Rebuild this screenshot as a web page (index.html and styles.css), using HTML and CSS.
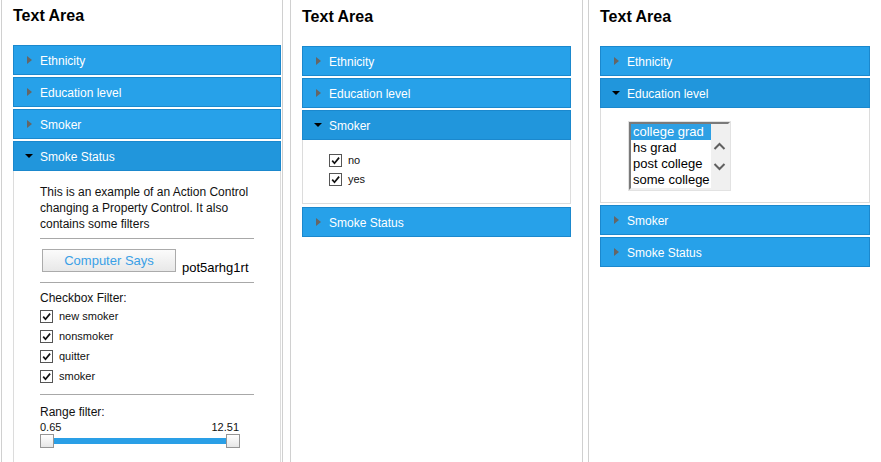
FILE: index.html
```html
<!DOCTYPE html>
<html lang="en">
<head>
    <meta charset="UTF-8">
    <title>Text Area</title>
    <link rel="stylesheet" href="styles.css">
</head>
<body>
    <div class="panels">
        <!-- first panel : smoke status opened -->
        <div class="panel panel-one">
            <h2 class="panel-title">Text Area</h2>
            <div class="acc-head"><span class="caret"></span>Ethnicity</div>
            <div class="acc-head"><span class="caret"></span>Education level</div>
            <div class="acc-head"><span class="caret"></span>Smoker</div>
            <div class="acc-head is-open"><span class="caret"></span>Smoke Status</div>
            <div class="acc-body status-body">
                <p class="intro">This is an example of an Action Control changing a Property Control. It also contains some filters</p>
                <hr class="sep">
                <div class="says-row">
                    <button class="says-btn">Computer Says</button>
                    <span class="says-value">pot5arhg1rt</span>
                </div>
                <hr class="sep">
                <div class="filter-label">Checkbox Filter:</div>
                <div class="check-row">
                    <span class="check"><svg viewBox="0 0 11 11" width="11" height="11"><path d="M2.2 5.6l2.3 2.6 4.6-5.6" /></svg></span>new smoker
                </div>
                <div class="check-row">
                    <span class="check"><svg viewBox="0 0 11 11" width="11" height="11"><path d="M2.2 5.6l2.3 2.6 4.6-5.6" /></svg></span>nonsmoker
                </div>
                <div class="check-row">
                    <span class="check"><svg viewBox="0 0 11 11" width="11" height="11"><path d="M2.2 5.6l2.3 2.6 4.6-5.6" /></svg></span>quitter
                </div>
                <div class="check-row">
                    <span class="check"><svg viewBox="0 0 11 11" width="11" height="11"><path d="M2.2 5.6l2.3 2.6 4.6-5.6" /></svg></span>smoker
                </div>
                <hr class="sep">
                <div class="filter-label range-label">Range filter:</div>
                <div class="range-values"><span>0.65</span><span>12.51</span></div>
                <div class="range">
                    <span class="thumb"></span>
                    <span class="thumb"></span>
                </div>
            </div>
        </div>

        <!-- second panel : smoker opened -->
        <div class="panel panel-two">
            <h2 class="panel-title">Text Area</h2>
            <div class="acc-head"><span class="caret"></span>Ethnicity</div>
            <div class="acc-head"><span class="caret"></span>Education level</div>
            <div class="acc-head is-open"><span class="caret"></span>Smoker</div>
            <div class="acc-body smoker-body">
                <div class="check-row short">
                    <span class="check"><svg viewBox="0 0 11 11" width="11" height="11"><path d="M2.2 5.6l2.3 2.6 4.6-5.6" /></svg></span>no
                </div>
                <div class="check-row short">
                    <span class="check"><svg viewBox="0 0 11 11" width="11" height="11"><path d="M2.2 5.6l2.3 2.6 4.6-5.6" /></svg></span>yes
                </div>
            </div>
            <div class="acc-head"><span class="caret"></span>Smoke Status</div>
        </div>

        <!-- third panel : education level opened -->
        <div class="panel panel-three">
            <h2 class="panel-title">Text Area</h2>
            <div class="acc-head"><span class="caret"></span>Ethnicity</div>
            <div class="acc-head is-open"><span class="caret"></span>Education level</div>
            <div class="acc-body education-body">
                <div class="listbox">
                    <div class="listbox-inner">
                        <ul class="list-items">
                            <li class="is-selected">college grad</li>
                            <li>hs grad</li>
                            <li>post college</li>
                            <li>some college</li>
                        </ul>
                        <div class="list-scroll">
                            <svg viewBox="0 0 17 64" width="17" height="64">
                                <path d="M3.5 25l5-5 5 5" />
                                <path d="M3.5 40l5 5 5-5" />
                            </svg>
                        </div>
                    </div>
                </div>
            </div>
            <div class="acc-head"><span class="caret"></span>Smoker</div>
            <div class="acc-head"><span class="caret"></span>Smoke Status</div>
        </div>
    </div>
</body>
</html>
```

FILE: styles.css
```css
body {
    margin: 0;
    font-family: "Liberation Sans", Arial, sans-serif;
    color: #111;
    background: #fff;
}

.panels {
    display: flex;
    height: 462px;
    overflow: hidden;
}

.panel {
    box-sizing: border-box;
    border-left: 1px solid #d0d0d0;
    border-right: 1px solid #d0d0d0;
    padding: 7px 11px 0 11px;
    flex: none;
}

.panel-one {
    width: 282px;
    margin-left: 1px;
    padding: 6px 1px 0 11px;
}

.panel-two {
    width: 293px;
    margin-left: 7px;
}

.panel-three {
    width: 293px;
    margin-left: 5px;
    border-right: 0;
}

.panel-title {
    margin: 0 0 19px;
    font-size: 16px;
    line-height: 20px;
    font-weight: bold;
    color: #000;
}

/* accordion */
.acc-head {
    box-sizing: border-box;
    display: flex;
    align-items: center;
    height: 30px;
    margin-bottom: 2px;
    padding: 2px 0 0 13px;
    background: #27a1e9;
    border: 1px solid #1b88cd;
    color: #fff;
    font-size: 12px;
}

.caret {
    width: 0;
    height: 0;
    margin: -2px 8px 0 0;
    border-left: 5px solid #666;
    border-top: 4px solid transparent;
    border-bottom: 4px solid transparent;
}

.acc-head.is-open {
    padding-left: 11px;
    margin-bottom: 0;
    background: #2196dc;
}

.acc-head.is-open .caret {
    border-left: 4px solid transparent;
    border-right: 4px solid transparent;
    border-top: 4px solid #000;
    border-bottom: 0;
    margin-right: 7px;
}

.acc-body {
    border: 1px solid #dcdcdc;
    border-top: 0;
    margin-bottom: 2px;
    padding: 0 26px;
}

.status-body {
    padding-top: 13px;
    padding-bottom: 20px;
    font-size: 12px;
}

.smoker-body {
    padding-top: 11px;
    padding-bottom: 14px;
    margin-bottom: 3px;
}

.education-body {
    padding-top: 13px;
    padding-bottom: 11px;
}

.intro {
    margin: 0;
    line-height: 16px;
}

.sep {
    height: 0;
    border: 0;
    border-top: 1px solid #a8a8a8;
    margin: 6px 0 0;
}

.says-row {
    display: flex;
    align-items: flex-end;
    gap: 6px;
    margin: 10px 0;
}

.says-btn {
    box-sizing: border-box;
    width: 134px;
    height: 23px;
    margin-left: 2px;
    padding: 0;
    border: 1px solid #ababab;
    background: linear-gradient(#fbfbfb, #e8e8e8);
    color: #3aa0e6;
    font-family: "Liberation Sans", Arial, sans-serif;
    font-size: 13px;
}

.says-value {
    font-size: 13px;
    line-height: 13px;
    margin-bottom: -2px;
    color: #000;
}

.says-row + .sep {
    margin-top: 0;
}

.filter-label {
    margin-top: 8px;
    line-height: 15px;
}

.range-label {
    margin-top: 9px;
    line-height: 16px;
}

.check-row {
    display: flex;
    align-items: center;
    height: 20px;
    font-size: 11px;
    line-height: 11px;
}

.check-row.short {
    height: 19px;
}

.check {
    box-sizing: border-box;
    width: 13px;
    height: 13px;
    margin-right: 6px;
    border: 1px solid #555;
    background: #fff;
    display: flex;
}

.check path {
    fill: none;
    stroke: #111;
    stroke-width: 1.7;
}

.check-row + .sep {
    margin-top: 8px;
}

.range-values {
    display: flex;
    justify-content: space-between;
    width: 199px;
    font-size: 11px;
    line-height: 14px;
}

.range {
    display: flex;
    justify-content: space-between;
    width: 200px;
    height: 14px;
    background: linear-gradient(transparent 4px, #2a9fe6 4px, #2a9fe6 10px, transparent 10px);
}

.thumb {
    box-sizing: border-box;
    width: 14px;
    height: 14px;
    border: 1px solid #959595;
    background: linear-gradient(#ffffff, #e6e6e6);
}

/* list box */
.listbox {
    display: flex;
    width: fit-content;
    margin-left: 1px;
    border: 1px solid #e2e2e2;
}

.listbox-inner {
    display: flex;
    border-style: solid;
    border-width: 2px;
    border-color: #7a7a7a #f0f0f0 #f0f0f0 #7a7a7a;
}

.list-items {
    list-style: none;
    margin: 0;
    padding: 0;
    width: 80px;
    background: #fff;
}

.list-items li {
    height: 16px;
    padding-left: 2px;
    font-size: 13px;
    line-height: 16px;
    white-space: nowrap;
    color: #000;
}

.list-items li.is-selected {
    background: #2ea0e4;
    color: #fff;
}

.list-scroll {
    width: 17px;
    background: #f0f0f0;
}

.list-scroll svg {
    display: block;
}

.list-scroll path {
    fill: none;
    stroke: #606060;
    stroke-width: 2;
}
```
